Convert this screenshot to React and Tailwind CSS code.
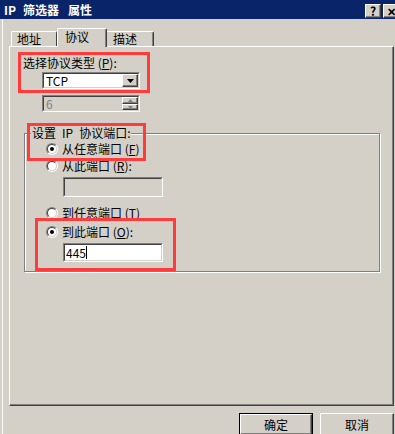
const raised =
  "border border-t-white border-l-white border-b-[#404040] border-r-[#404040] shadow-[inset_-1px_-1px_0_#808080]";

const Sunken = ({ className = "", inner = "bg-white", children }) => (
  <div
    className={`border border-t-[#808080] border-l-[#808080] border-b-white border-r-white ${className}`}
  >
    <div
      className={`h-full border border-t-[#404040] border-l-[#404040] border-b-[#d4d0c8] border-r-[#d4d0c8] flex items-stretch ${inner}`}
    >
      {children}
    </div>
  </div>
);

const Radio = ({ checked }) => (
  <div className="w-[12px] h-[12px] shrink-0 rounded-full border border-t-[#808080] border-l-[#808080] border-b-white border-r-white">
    <div className="w-full h-full rounded-full border border-t-[#404040] border-l-[#404040] border-b-[#d4d0c8] border-r-[#d4d0c8] bg-white flex items-center justify-center">
      {checked && <div className="w-[4px] h-[4px] rounded-full bg-black" />}
    </div>
  </div>
);

const RadioRow = ({ checked, className = "", children }) => (
  <div className={`ml-[21px] h-[12px] flex items-center gap-[4px] ${className}`}>
    <Radio checked={checked} />
    <span className="leading-[12px]">{children}</span>
  </div>
);

const Tab = ({ width, children }) => (
  <div
    className={`${width} h-[15px] border-t border-l border-r border-t-white border-l-white border-r-[#404040] rounded-t-[2px] pl-[5px] leading-[14px]`}
  >
    {children}
  </div>
);

export default function App() {
  return (
    <div className="w-[395px] h-[434px] overflow-hidden bg-[#d4d0c8] relative font-['Noto_Sans_CJK_SC',sans-serif] text-[12px] text-black">
      {/* Title bar */}
      <div className="h-[19px] bg-[#0a246a] flex items-start justify-between pl-[4px]">
        <span className="text-white font-bold leading-[19px] flex">
          <span>IP</span>
          <span className="ml-[7px]">筛选器</span>
          <span className="ml-[9px]">属性</span>
        </span>
        <div className="flex gap-[2px] mt-[4px] -mr-[4px]">
          <div className={`w-[16px] h-[14px] bg-[#d4d0c8] ${raised} flex items-center justify-center font-bold leading-none text-[12px]`}>
            ?
          </div>
          <div className={`w-[16px] h-[14px] bg-[#d4d0c8] ${raised} flex items-center justify-center font-bold leading-none text-[11px]`}>
            ✕
          </div>
        </div>
      </div>

      {/* Body */}
      <div className="h-[415px] shadow-[inset_2px_0_0_#d4d0c8,inset_3px_0_0_#ffffff] pt-[9px]">
        {/* Tabs */}
        <div className="flex items-end h-[18px] pl-[11px]">
          <Tab width="w-[46px]">地址</Tab>
          <div className="w-[50px] h-[19px] -mb-px relative z-10 bg-[#d4d0c8] border-t border-l border-r border-t-white border-l-white border-r-[#404040] shadow-[inset_-1px_0_0_#808080] rounded-t-[2px] pl-[7px] pt-[1px] leading-[14px]">
            协议
          </div>
          <div className="w-[47px] h-[15px] border-t border-r border-t-white border-r-[#404040] shadow-[inset_-1px_0_0_#808080] rounded-tr-[2px] pl-[6px] leading-[14px]">
            描述
          </div>
        </div>

        {/* Panel */}
        <div className="ml-[9px] w-[385px] h-[360px] border border-t-white border-l-white border-b-[#404040] border-r-[#404040] shadow-[inset_-1px_-1px_0_#808080]">
          <div className="ml-[13px] mt-[9px] leading-[14px]">
            选择协议类型 (<u>P</u>):
          </div>

          {/* Combo */}
          <Sunken className="ml-[32px] mt-[2px] w-[98px] h-[17px]">
            <div className="flex-1 pl-[2px] leading-[13px]">TCP</div>
            <div className={`w-[16px] bg-[#d4d0c8] ${raised} flex items-center justify-center`}>
              <svg width="7" height="4" viewBox="0 0 7 4">
                <polygon points="0,0 7,0 3.5,4" fill="#000" />
              </svg>
            </div>
          </Sunken>

          {/* Disabled spin */}
          <Sunken className="ml-[32px] mt-[6px] w-[98px] h-[17px]" inner="bg-[#d4d0c8]">
            <div className="flex-1 pl-[2px] leading-[13px] text-[#808080]">6</div>
            <div className="w-[16px] flex flex-col">
              <div className={`h-[7px] bg-[#d4d0c8] ${raised} flex items-center justify-center`}>
                <svg width="5" height="3" viewBox="0 0 5 3">
                  <polygon points="2.5,0 5,3 0,3" fill="#808080" />
                </svg>
              </div>
              <div className={`h-[6px] bg-[#d4d0c8] ${raised} flex items-center justify-center`}>
                <svg width="5" height="3" viewBox="0 0 5 3">
                  <polygon points="0,0 5,0 2.5,3" fill="#808080" />
                </svg>
              </div>
            </div>
          </Sunken>

          {/* Group box */}
          <div className="ml-[14px] mt-[21px] w-[356px] h-[139px] border border-[#808080] shadow-[inset_1px_1px_0_#ffffff,1px_1px_0_#ffffff] relative">
            <span className="absolute left-[6px] -top-[7px] px-[1px] bg-[#d4d0c8] leading-[12px] flex">
              <span>设置</span>
              <span className="ml-[6px]">IP</span>
              <span className="ml-[6px]">协议端口:</span>
            </span>

            <RadioRow checked className="mt-[9px]">
              从任意端口 (<u>F</u>)
            </RadioRow>
            <RadioRow className="mt-[5px]">
              从此端口 (<u>R</u>):
            </RadioRow>
            <Sunken className="ml-[38px] mt-[5px] w-[100px] h-[20px]" inner="bg-[#d4d0c8]" />
            <RadioRow className="mt-[10px]">
              到任意端口 (<u>T</u>)
            </RadioRow>
            <RadioRow checked className="mt-[7px]">
              到此端口 (<u>O</u>):
            </RadioRow>
            <Sunken className="ml-[38px] mt-[5px] w-[100px] h-[19px]">
              <div className="pl-[1px] leading-[15px] flex items-center">
                445<span className="inline-block w-px h-[13px] bg-black" />
              </div>
            </Sunken>
          </div>
        </div>

        {/* Buttons */}
        <div className="flex justify-end gap-[7px] pr-[1px] mt-[7px]">
          <div className="w-[74px] h-[23px] border border-black">
            <div className={`h-full bg-[#d4d0c8] ${raised} flex items-center justify-center`}>确定</div>
          </div>
          <div className={`w-[74px] h-[23px] bg-[#d4d0c8] ${raised} flex items-center justify-center`}>取消</div>
        </div>
      </div>

      {/* Red annotation boxes */}
      <div className="absolute left-[18px] top-[52px] w-[132px] h-[41px] border-[3px] border-[#ff3b3b]" />
      <div className="absolute left-[27px] top-[123px] w-[119px] h-[38px] border-[3px] border-[#ff3b3b]" />
      <div className="absolute left-[35px] top-[218px] w-[141px] h-[53px] border-[3px] border-[#ff3b3b]" />
    </div>
  );
}
